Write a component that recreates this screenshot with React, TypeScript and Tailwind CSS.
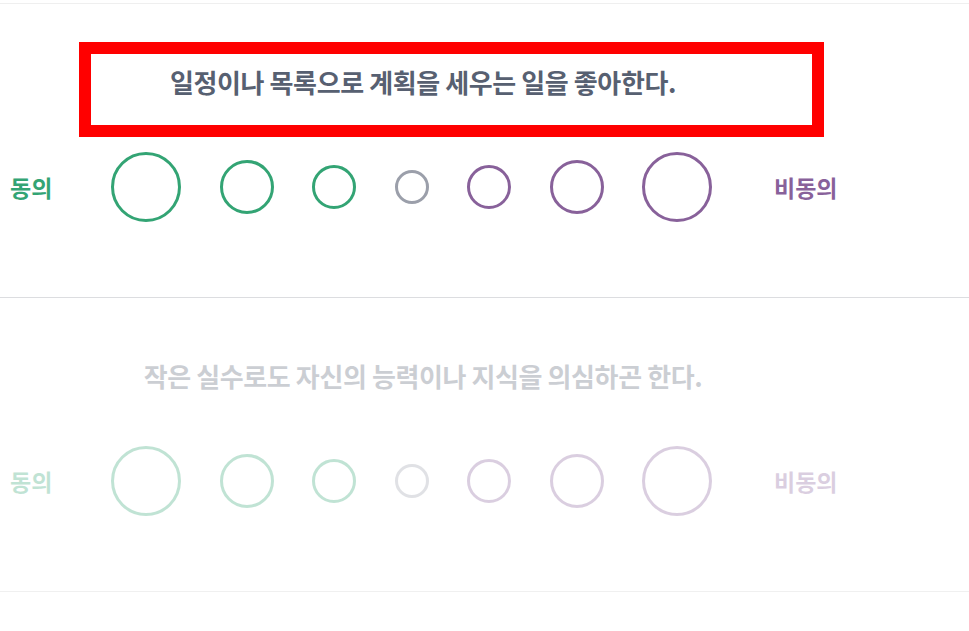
interface Question {
  text: string;
  active: boolean;
}

const questions: Question[] = [
  { text: "일정이나 목록으로 계획을 세우는 일을 좋아한다.", active: true },
  { text: "작은 실수로도 자신의 능력이나 지식을 의심하곤 한다.", active: false },
];

function Options() {
  return (
    <div className="flex items-center gap-[38.5px]">
      <span className="h-[70px] w-[70px] rounded-full border-[3px] border-[#33a474]" />
      <span className="h-[54px] w-[54px] rounded-full border-[3px] border-[#33a474]" />
      <span className="h-[44px] w-[44px] rounded-full border-[3px] border-[#33a474]" />
      <span className="h-[34px] w-[34px] rounded-full border-[3px] border-[#9b9faa]" />
      <span className="h-[44px] w-[44px] rounded-full border-[3px] border-[#88619a]" />
      <span className="h-[54px] w-[54px] rounded-full border-[3px] border-[#88619a]" />
      <span className="h-[70px] w-[70px] rounded-full border-[3px] border-[#88619a]" />
    </div>
  );
}

function QuestionBlock({ q, last }: { q: Question; last: boolean }) {
  return (
    <div
      className={`h-[294px] border-b ${last ? "border-[#f0f0f0]" : "border-[#dcdde0]"}`}
    >
      <div className={`w-[846px] ${q.active ? "" : "opacity-30"}`}>
        <div className="flex h-[148px] items-start justify-center pt-[61px]">
          <p className="whitespace-nowrap text-[26px] font-bold leading-[34px] tracking-[-0.4px] text-[#576071]">
            {q.text}
          </p>
        </div>
        <div className="flex h-[70px] items-center px-[10px]">
          <span className="w-[41px] whitespace-nowrap text-[23px] font-bold leading-none text-[#33a474]">
            동의
          </span>
          <div className="ml-[60px]">
            <Options />
          </div>
          <span className="ml-[62px] whitespace-nowrap text-[23px] font-bold leading-none text-[#88619a]">
            비동의
          </span>
        </div>
      </div>
    </div>
  );
}

export default function App() {
  return (
    <div
      className="relative min-h-[631px] w-full bg-white pt-[3px]"
      style={{ fontFamily: '"Noto Sans CJK KR", "Noto Sans", sans-serif' }}
    >
      <div className="border-t border-[#efefef]">
        {questions.map((q, i) => (
          <QuestionBlock key={i} q={q} last={i === questions.length - 1} />
        ))}
      </div>
      <div className="pointer-events-none absolute left-[79px] top-[42px] h-[95px] w-[745px] border-[12px] border-[#ff0000]" />
    </div>
  );
}
